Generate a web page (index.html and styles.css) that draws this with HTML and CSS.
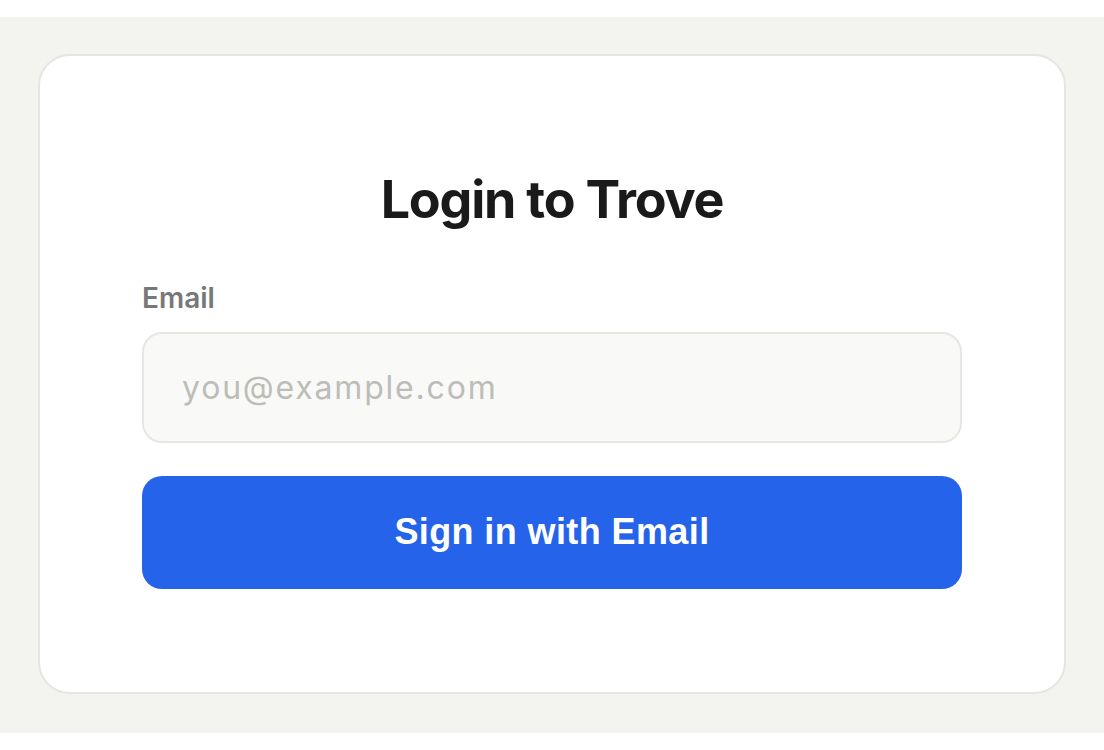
FILE: index.html
```html
<!DOCTYPE html>
<html lang="en">
<head>
<meta charset="utf-8">
<title>Login to Trove</title>
<link rel="stylesheet" href="styles.css">
</head>
<body>
<div class="page">
  <main class="stage">
    <section class="card">
      <h1 class="title">Login to Trove</h1>
      <form class="form">
        <label class="label" for="email">Email</label>
        <input class="input" id="email" type="email" placeholder="you@example.com">
        <button class="button" type="button">Sign in with Email</button>
      </form>
    </section>
  </main>
</div>
</body>
</html>
```
FILE: styles.css
```css
html, body {
  margin: 0;
  padding: 0;
  background: #ffffff;
}
.page {
  padding-top: 17px;
}
.stage {
  background: #f3f3ef;
  padding: 37px 38px 39px;
}
.card {
  background: #ffffff;
  border: 2px solid #e6e6e1;
  border-radius: 32px;
  padding: 113px 102px 103px;
  font-family: Inter, "Noto Sans", sans-serif;
}
.title {
  margin: 0;
  text-align: center;
  font-size: 52px;
  line-height: 1.2;
  font-weight: 700;
  color: #1a1a1a;
  letter-spacing: -1.2px;
}
.form {
  display: flex;
  flex-direction: column;
  margin-top: 51px;
}
.label {
  font-size: 28px;
  line-height: 1.2;
  font-weight: 600;
  color: #787878;
}
.input {
  margin-top: 16px;
  box-sizing: border-box;
  height: 111px;
  border: 2px solid #e7e7e2;
  border-radius: 20px;
  background: #f9f9f7;
  padding: 0 38px;
  font-family: Inter, "Noto Sans", sans-serif;
  font-size: 32px;
  letter-spacing: 1.8px;
  color: #1a1a1a;
  outline: none;
}
.input::placeholder {
  color: #bdbdb8;
}
.button {
  margin-top: 33px;
  height: 113px;
  border: none;
  border-radius: 20px;
  background: #2563eb;
  color: #ffffff;
  font-family: "Liberation Sans", Arial, sans-serif;
  font-size: 36px;
  font-weight: 700;
  letter-spacing: 0.4px;
}
```
